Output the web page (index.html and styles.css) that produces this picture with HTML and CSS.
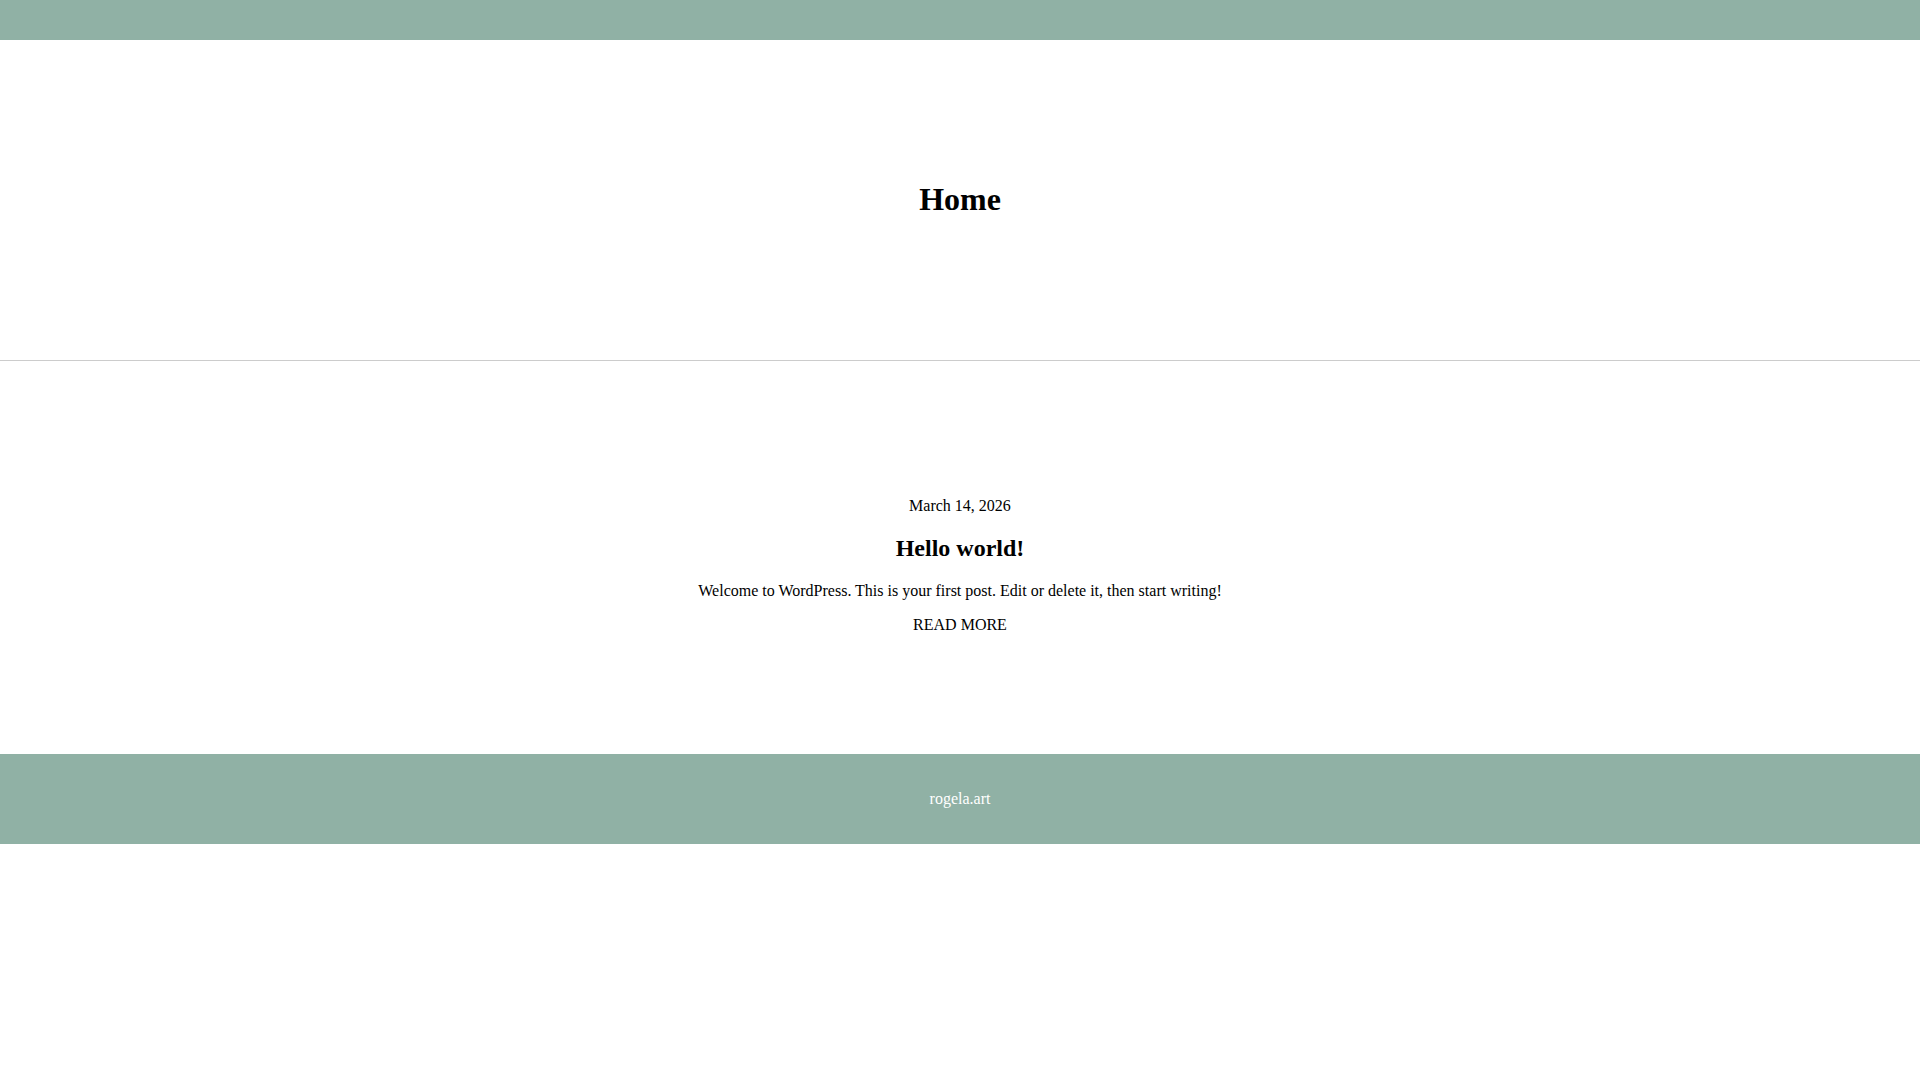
FILE: index.html
```html
<!DOCTYPE html>
<html lang="en">
<head>
<meta charset="utf-8">
<title>Home</title>
<link rel="stylesheet" href="styles.css">
</head>
<body>
<div class="topbar"></div>
<header class="page-header">
  <h1 class="page-title">Home</h1>
</header>
<main class="posts">
  <article class="post">
    <div class="post-date">March 14, 2026</div>
    <h2 class="post-title">Hello world!</h2>
    <p class="post-excerpt">Welcome to WordPress. This is your first post. Edit or delete it, then start writing!</p>
    <a class="read-more" href="#">READ MORE</a>
  </article>
</main>
<footer class="site-footer">
  <span class="footer-text">rogela.art</span>
</footer>
</body>
</html>
```
FILE: styles.css
```css
html, body {
  margin: 0;
  padding: 0;
  background: #ffffff;
  color: #000000;
  font-family: "Liberation Serif", "Times New Roman", serif;
  font-size: 16px;
}

.topbar {
  height: 40px;
  background: #90b1a5;
}

.page-header {
  height: 321px;
  box-sizing: border-box;
  border-bottom: 1px solid #cccccc;
  display: flex;
  align-items: center;
  justify-content: center;
  padding-bottom: 2px;
}

.page-title {
  margin: 0;
  font-size: 32px;
  font-weight: bold;
  line-height: 38px;
}

.posts {
  padding-top: 133px;
  padding-bottom: 117px;
}

.post {
  display: flex;
  flex-direction: column;
  align-items: center;
  text-align: center;
}

.post-date {
  line-height: 24px;
}

.post-title {
  margin: 16px 0 0;
  font-size: 24px;
  font-weight: bold;
  line-height: 29px;
}

.post-excerpt {
  margin: 16px 0 0;
  line-height: 24px;
}

.read-more {
  margin-top: 10px;
  line-height: 24px;
  color: #000000;
  text-decoration: none;
}

.site-footer {
  background: #90b1a5;
  height: 90px;
  display: flex;
  align-items: center;
  justify-content: center;
}

.footer-text {
  color: #ffffff;
  line-height: 24px;
}
```
